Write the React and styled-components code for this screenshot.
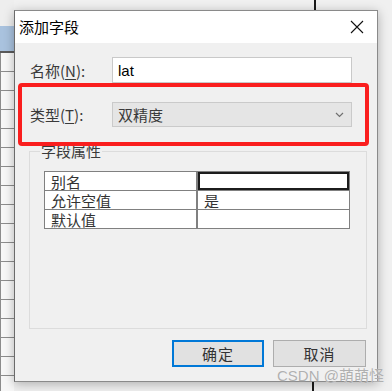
import React from "react";
import styled, { createGlobalStyle } from "styled-components";

const Global = createGlobalStyle`
  * { box-sizing: border-box; }
  html, body { margin: 0; padding: 0; }
  body {
    width: 392px;
    height: 391px;
    overflow: hidden;
    background: #f0f0f0;
    font-family: "Noto Sans CJK SC", "Noto Sans", sans-serif;
  }
`;

const Desktop = styled.div`
  position: relative;
  width: 392px;
  height: 391px;
  overflow: hidden;
  background: #f0f0f0;
`;

const BackGrid = styled.div`
  position: absolute;
  left: 0;
  top: 0;
  width: 14px;
  height: 391px;
  display: flex;
  flex-direction: column;
`;

const GridTop = styled.div`
  height: 26px;
  background: #eeeeee;
`;

const GridHeader = styled.div`
  height: 27px;
  background: #a9c2de;
  border-bottom: 2px solid #5a5a5a;
`;

const GridRows = styled.div`
  flex: 1;
  background-color: #f7f7f7;
  background-image: repeating-linear-gradient(
    to bottom,
    #f7f7f7 0,
    #f7f7f7 18px,
    #8c8c8c 18px,
    #8c8c8c 19px
  );
  border-left: 1px solid #8c8c8c;
`;

const VLine = styled.div`
  position: absolute;
  left: ${(p) => p.$x}px;
  top: ${(p) => p.$top}px;
  width: 2px;
  height: ${(p) => p.$h}px;
  background: #1a1a1a;
`;

const Dialog = styled.div`
  position: absolute;
  left: 14px;
  top: 10px;
  width: 364px;
  height: 372px;
  background: #f0f0f0;
  border: 1px solid #8a8a8a;
  border-left-color: #6a6a6a;
  box-shadow: 0 2px 10px rgba(0, 0, 0, 0.28);
  display: flex;
  flex-direction: column;
`;

const TitleBar = styled.div`
  height: 32px;
  background: #ffffff;
  display: flex;
  align-items: center;
  justify-content: space-between;
  padding: 0 8px 0 4px;
`;

const Title = styled.span`
  font-size: 15px;
  color: #000;
  line-height: 1;
  margin-top: -1px;
`;

const CloseIcon = () => (
  <svg width="24" height="24" viewBox="0 0 24 24">
    <path d="M6 6 L18 18 M18 6 L6 18" stroke="#111" strokeWidth="1.1" fill="none" />
  </svg>
);

const Body = styled.div`
  position: relative;
  flex: 1;
  display: flex;
  flex-direction: column;
  padding: 14px 10px 0 14px;
`;

const Row = styled.div`
  display: flex;
  align-items: center;
  height: ${(p) => p.$h}px;
  margin-top: ${(p) => p.$mt || 0}px;
`;

const Label = styled.span`
  width: 83px;
  padding-left: 1px;
  font-size: 15px;
  color: #3a3a3a;
  u { text-decoration-thickness: 1px; text-underline-offset: 2px; }
`;

const TextInput = styled.div`
  width: 240px;
  height: 100%;
  background: #fff;
  border: 1px solid #c9c9c9;
  display: flex;
  align-items: center;
  padding-left: 5px;
  font-family: "Liberation Sans", Arial, sans-serif;
  font-size: 15px;
  color: #000;
`;

const Select = styled.div`
  width: 240px;
  height: 100%;
  background: #e5e5e5;
  border: 1px solid #cacaca;
  display: flex;
  align-items: center;
  justify-content: space-between;
  padding: 0 7px 0 5px;
  font-size: 15px;
  color: #3a3a3a;
`;

const Chevron = () => (
  <svg width="9" height="6" viewBox="0 0 9 6">
    <path d="M1 1 L4.5 4.5 L8 1" stroke="#707070" strokeWidth="1.2" fill="none" />
  </svg>
);

const Group = styled.fieldset`
  margin: 16px 0 0 0;
  padding: 0;
  width: 338px;
  height: 186px;
  border: 1px solid #dcdcdc;
  min-width: 0;
`;

const Legend = styled.legend`
  margin-left: 10px;
  padding: 0 1px;
  font-size: 15px;
  line-height: 16px;
  color: #3a3a3a;
`;

const Props = styled.table`
  margin: 12px 0 0 14px;
  width: 306px;
  border-collapse: collapse;
  background: #fff;
  font-size: 15px;
  color: #333;
`;

const Cell = styled.td`
  height: 19px;
  padding: 0 0 0 6px;
  line-height: 17px;
  border: 1px solid #808080;
  border-right-width: ${(p) => (p.$first ? 2 : 1)}px;
  width: 153px;
  white-space: nowrap;
  ${(p) => p.$focus && `box-shadow: inset 0 0 0 2px #1c1c1c;`}
`;

const Buttons = styled.div`
  display: flex;
  justify-content: flex-end;
  gap: 9px;
  margin-top: 11px;
  padding-right: 1px;
`;

const Button = styled.div`
  width: ${(p) => p.$w}px;
  height: 27px;
  background: #e1e1e1;
  border: ${(p) => (p.$primary ? "2px solid #0078d7" : "1px solid #adadad")};
  display: flex;
  align-items: center;
  justify-content: center;
  font-size: 15px;
  color: #333;
  letter-spacing: 1px;
`;

const Highlight = styled.div`
  position: absolute;
  left: 3px;
  top: 40px;
  width: 351px;
  height: 63px;
  border: 4px solid #fa1e1e;
  border-radius: 4px;
  pointer-events: none;
`;

const Watermark = styled.div`
  position: absolute;
  left: 277px;
  top: 364px;
  font-family: "Liberation Sans", "Noto Sans CJK SC", sans-serif;
  font-size: 15px;
  color: #b0b0b0;
  text-shadow: 0 0 1px rgba(255, 255, 255, 0.8);
  white-space: nowrap;
`;

const rows = [
  ["别名", "", true],
  ["允许空值", "是", false],
  ["默认值", "", false],
];

export default function App() {
  return (
    <Desktop>
      <Global />
      <BackGrid>
        <GridTop />
        <GridHeader />
        <GridRows />
      </BackGrid>
      <VLine $x={314} $top={0} $h={11} />
      <VLine $x={312} $top={380} $h={11} />
      <Dialog>
        <TitleBar>
          <Title>添加字段</Title>
          <CloseIcon />
        </TitleBar>
        <Body>
          <Row $h={26}>
            <Label>
              名称(<u>N</u>):
            </Label>
            <TextInput>lat</TextInput>
          </Row>
          <Row $h={25} $mt={19}>
            <Label>
              类型(<u>T</u>):
            </Label>
            <Select>
              <span>双精度</span>
              <Chevron />
            </Select>
          </Row>
          <Group>
            <Legend>字段属性</Legend>
            <Props>
              <tbody>
                {rows.map(([k, v, focus]) => (
                  <tr key={k}>
                    <Cell $first>{k}</Cell>
                    <Cell $focus={focus}>{v}</Cell>
                  </tr>
                ))}
              </tbody>
            </Props>
          </Group>
          <Buttons>
            <Button $primary $w={92}>确定</Button>
            <Button $w={93}>取消</Button>
          </Buttons>
          <Highlight />
        </Body>
      </Dialog>
      <Watermark>CSDN @萌萌怪</Watermark>
    </Desktop>
  );
}
